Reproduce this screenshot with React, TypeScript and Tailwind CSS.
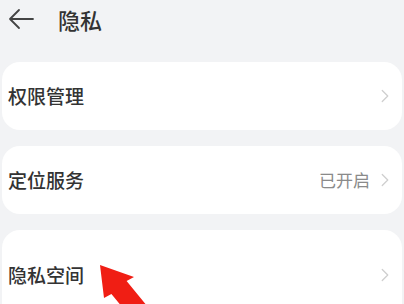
import { ChevronRight } from "lucide-react";

const font = { fontFamily: '"Noto Sans CJK SC", "Noto Sans", sans-serif' };

function Row({ label, value, className }: { label: string; value?: string; className: string }) {
  return (
    <div className={`flex items-center justify-between bg-white rounded-[18px] pl-1.5 pr-1.5 ${className}`}>
      <span className="text-[19px] font-medium text-[#333333]">{label}</span>
      <div className="flex items-center gap-1">
        {value && <span className="text-[17px] text-[#8a8a8a]">{value}</span>}
        <ChevronRight size={22} strokeWidth={1.4} className="text-[#cfcfcf]" />
      </div>
    </div>
  );
}

export default function App() {
  return (
    <div className="relative w-[404px] h-[304px] overflow-hidden bg-[#f2f3f5]" style={font}>
      <div className="flex items-center h-[38px] pl-2">
        <svg width="26" height="22" viewBox="0 0 26 22" fill="none" stroke="#444" strokeWidth="1.8" strokeLinecap="round" strokeLinejoin="round">
          <path d="M25 11H2M11 2L2 11l9 9" />
        </svg>
        <span className="ml-6 text-[22px] font-medium text-[#333333]">隐私</span>
      </div>
      <div className="mt-6 flex flex-col gap-4 px-0.5">
        <Row label="权限管理" className="h-[68px]" />
        <Row label="定位服务" value="已开启" className="h-[68px]" />
        <Row label="隐私空间" className="h-[90px]" />
      </div>
      <svg className="absolute left-0 top-0" width="404" height="304" viewBox="0 0 404 304">
        <polygon points="100,265 134,277 126.6,281 152,312 137,325 111.4,294 104,298" fill="#f01e14" />
      </svg>
    </div>
  );
}
